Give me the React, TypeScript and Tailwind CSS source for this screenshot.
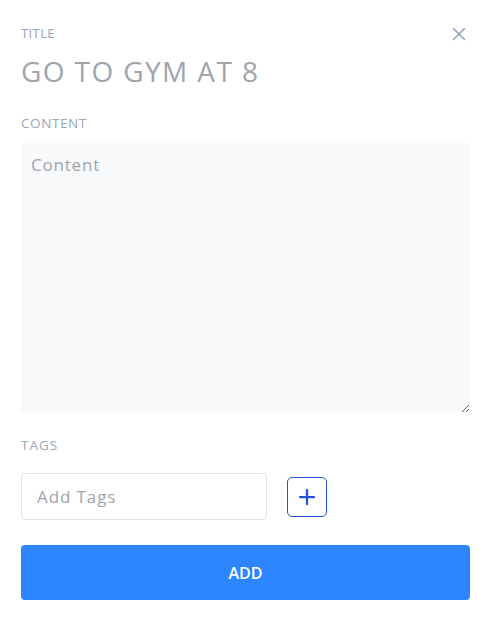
import { X, Plus } from 'lucide-react'

export default function App() {
  return (
    <div
      className="w-[493px] h-[623px] bg-white px-[21px] pt-[24px] text-[#9aa5b8]"
      style={{ fontFamily: '"Open Sans", "Liberation Sans", sans-serif' }}
    >
      <div className="flex justify-between items-start w-[449px]">
        <div className="text-[13px] leading-[18px] tracking-[0.4px] uppercase">Title</div>
        <button className="-mt-[1px] text-[#94a3b8]">
          <X size={22} strokeWidth={1.75} />
        </button>
      </div>
      <div className="mt-[7px] text-[28px] leading-[38px] text-[#a0a4ad] tracking-[1.4px]">GO TO GYM AT 8</div>

      <div className="mt-[24px] text-[13.5px] leading-[18px] tracking-[0.6px] uppercase">Content</div>
      <textarea
        placeholder="Content"
        className="mt-[11px] block w-[449px] h-[270px] bg-[#f8f9fb] rounded-[4px] px-[10px] py-[9px] text-[17px] tracking-[0.8px] outline-none placeholder:text-[#a0a4ad]"
      />

      <div className="mt-[23px] text-[13.5px] leading-[18px] tracking-[1px] uppercase">Tags</div>
      <div className="mt-[19px] flex items-center gap-[20px]">
        <input
          placeholder="Add Tags"
          className="w-[246px] h-[47px] border border-[#e2e2e2] rounded-[4px] px-[15px] text-[17px] tracking-[0.9px] outline-none placeholder:text-[#a0a4ad]"
        />
        <button className="w-[40px] h-[40px] border border-[#2452d8] rounded-[5px] flex items-center justify-center text-[#2452d8]">
          <Plus size={24} strokeWidth={2.25} />
        </button>
      </div>

      <button className="mt-[25px] w-[449px] h-[55px] bg-[#2d85ff] rounded-[4px] text-white text-[16px] font-semibold">
        ADD
      </button>
    </div>
  )
}
